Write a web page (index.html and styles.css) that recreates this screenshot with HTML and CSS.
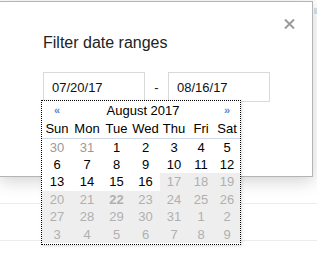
FILE: index.html
```html
<!DOCTYPE html>
<html lang="en">
<head>
    <meta charset="UTF-8">
    <meta name="viewport" content="width=device-width, initial-scale=1.0">
    <title>Filter date ranges</title>
    <link rel="stylesheet" href="styles.css">
</head>
<body>
    <div class="page">
        <div class="row first"><span class="mark"></span></div>
        <div class="row"></div>
    </div>
    <div class="dialog">
        <button class="close" title="Close">
            <svg width="11" height="10" viewBox="0 0 11 10"><path d="M1 0.5 L10 9.5 M10 0.5 L1 9.5" stroke="#9a9a9a" stroke-width="2" fill="none"/></svg>
        </button>
        <h2 class="title">Filter date ranges</h2>
        <div class="range">
            <input class="date" type="text" value="07/20/17">
            <span class="dash">-</span>
            <input class="date" type="text" value="08/16/17">
            <div class="picker">
                <table>
                    <colgroup><col><col><col><col><col><col><col></colgroup>
                    <tr class="head">
                        <td class="nav">&laquo;</td>
                        <td colspan="5" class="month">August 2017</td>
                        <td class="nav">&raquo;</td>
                    </tr>
                    <tr class="dow">
                        <td>Sun</td><td>Mon</td><td>Tue</td><td>Wed</td><td>Thu</td><td>Fri</td><td>Sat</td>
                    </tr>
                    <tr>
                        <td class="other">30</td><td class="other">31</td><td>1</td><td>2</td><td>3</td><td>4</td><td>5</td>
                    </tr>
                    <tr>
                        <td>6</td><td>7</td><td>8</td><td>9</td><td>10</td><td>11</td><td>12</td>
                    </tr>
                    <tr>
                        <td>13</td><td>14</td><td>15</td><td>16</td><td class="off">17</td><td class="off">18</td><td class="off">19</td>
                    </tr>
                    <tr>
                        <td class="off">20</td><td class="off">21</td><td class="off today">22</td><td class="off">23</td><td class="off">24</td><td class="off">25</td><td class="off">26</td>
                    </tr>
                    <tr>
                        <td class="off">27</td><td class="off">28</td><td class="off">29</td><td class="off">30</td><td class="off">31</td><td class="off">1</td><td class="off">2</td>
                    </tr>
                    <tr>
                        <td class="off">3</td><td class="off">4</td><td class="off">5</td><td class="off">6</td><td class="off">7</td><td class="off">8</td><td class="off">9</td>
                    </tr>
                </table>
            </div>
        </div>
    </div>
</body>
</html>
```
FILE: styles.css
```css
* {
    margin: 0;
    box-sizing: border-box;
    font-family: 'Liberation Sans', Arial, sans-serif;
}
body {
    background-color: #fff;
    width: 317px;
    height: 254px;
    overflow: hidden;
}
.page {
    width: 100%;
}
.row {
    height: 37px;
    border-bottom: 1px solid #ececec;
}
.row.first {
    height: 204px;
    display: flex;
    justify-content: flex-end;
    padding-top: 8px;
}
.mark {
    width: 3px;
    height: 6px;
    background-color: #d4e1f3;
}
.dialog {
    position: absolute;
    top: 1px;
    left: -1px;
    width: 314px;
    height: 176px;
    background-color: #fff;
    border: 1px solid #b4b4b4;
    box-shadow: 0 4px 16px rgba(0, 0, 0, 0.18);
    padding: 32px 0 0 43px;
}
.close {
    position: absolute;
    top: 17px;
    right: 17px;
    width: 11px;
    height: 10px;
    padding: 0;
    border: none;
    background: none;
    display: block;
}
.close svg {
    display: block;
}
.title {
    font-size: 16px;
    line-height: 18px;
    font-weight: normal;
    color: #222;
}
.range {
    position: relative;
    display: flex;
    align-items: center;
    margin-top: 20px;
}
.date {
    width: 102px;
    height: 30px;
    border: 1px solid #d9d9d9;
    padding: 0 8px;
    font-size: 13px;
    color: #111;
    outline: none;
}
.dash {
    width: 23px;
    text-align: center;
    font-size: 13px;
    color: #222;
}
.picker {
    position: absolute;
    top: 28px;
    left: -2px;
    width: 200px;
    height: 145px;
    background-color: #fff;
    border: 1px dotted #000;
    box-shadow: 1px 1px 3px rgba(0, 0, 0, 0.15);
}
.picker table {
    width: 198px;
    table-layout: fixed;
    border-collapse: collapse;
    border-spacing: 0;
}
.picker col:nth-child(1), .picker col:nth-child(2) { width: 30px; }
.picker col:nth-child(3), .picker col:nth-child(4) { width: 29px; }
.picker col:nth-child(5) { width: 28px; }
.picker col:nth-child(6), .picker col:nth-child(7) { width: 26px; }
.picker td {
    height: 17.5px;
    padding: 0;
    text-align: center;
    font-size: 13px;
    line-height: 15px;
    color: #000;
}
.head td {
    height: 19px;
}
.picker td.nav {
    color: #5b86d6;
    font-size: 11px;
    font-weight: bold;
}
.dow td {
    height: 18px;
    border-bottom: 1px solid #cfd9ea;
}
.picker td.other {
    color: #9a9a9a;
}
.picker td.off {
    background-color: #eeeeee;
    color: #b0b0b0;
}
.picker td.today {
    font-weight: bold;
}
```
